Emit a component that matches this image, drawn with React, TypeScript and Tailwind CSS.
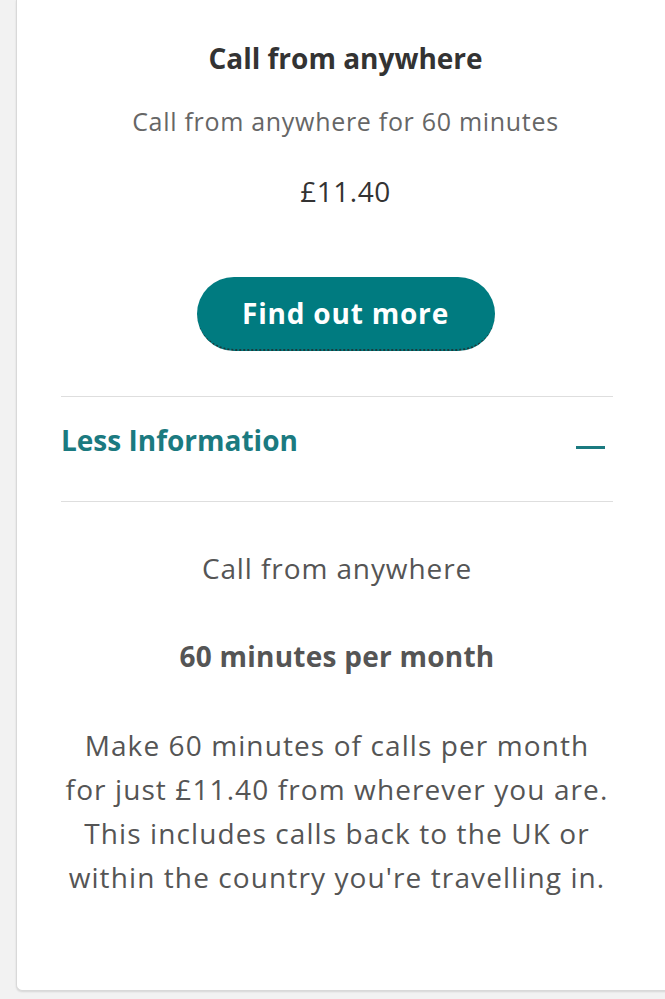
import React from "react";

export default function App() {
  const font = { fontFamily: '"Open Sans", "Liberation Sans", sans-serif' };
  return (
    <div className="w-[665px] h-[999px] bg-[#f2f2f2] overflow-hidden pl-[16px]" style={font}>
      <div className="w-[660px] h-[991px] bg-white border-l border-b border-[#d9d9d9] rounded-bl-[6px] shadow-[0_1px_2px_rgba(0,0,0,0.12)] flex flex-col">
        <div className="flex flex-col items-center pr-[2px] pt-[38px]">
          <h2 className="text-[28px] font-bold text-[#333333] leading-[40px]">Call from anywhere</h2>
          <p className="mt-[23px] text-[25px] tracking-[0.7px] text-[#666666] leading-[40px]">Call from anywhere for 60 minutes</p>
          <p className="mt-[30px] text-[28px] tracking-[0.5px] text-[#333333] leading-[40px]">£11.40</p>
          <button className="mt-[66px] w-[298px] h-[74px] rounded-full bg-[#007b80] text-white text-[28px] tracking-[0.8px] font-bold border-b-2 border-dotted border-[#1a3a3c]">
            Find out more
          </button>
        </div>
        <div className="pl-[44px] pr-[63px] mt-[45px]">
          <div className="border-t border-b border-[#dedede] h-[106px] flex items-start justify-between">
            <span className="mt-[23px] text-[28px] leading-[40px] font-bold text-[#1b7a80]">Less Information</span>
            <span className="block w-[29px] h-[3px] bg-[#1b7a80] mr-[8px] mt-[49px]" />
          </div>
          <div className="flex flex-col items-center text-center">
            <p className="mt-[46px] text-[28px] tracking-[0.9px] text-[#555555] leading-[40px]">Call from anywhere</p>
            <p className="mt-[48px] text-[28px] tracking-[0.25px] font-bold text-[#555555] leading-[40px]">60 minutes per month</p>
            <p className="mt-[47px] text-[28px] tracking-[1.1px] text-[#555555] leading-[44px]">
              Make 60 minutes of calls per month
              <br />
              for just £11.40 from wherever you are.
              <br />
              This includes calls back to the UK or
              <br />
              within the country you're travelling in.
            </p>
          </div>
        </div>
      </div>
    </div>
  );
}
